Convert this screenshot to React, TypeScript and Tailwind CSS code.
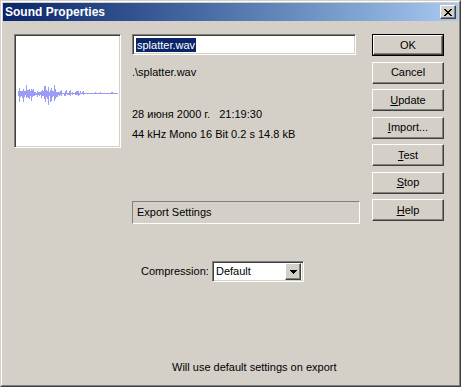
const raised =
  'border border-t-white border-l-white border-r-[#404040] border-b-[#404040] shadow-[inset_-1px_-1px_#808080]'
const sunken =
  'border border-t-[#808080] border-l-[#808080] border-r-white border-b-white shadow-[inset_1px_1px_#404040,inset_-1px_-1px_#d4d0c8]'

function rand(seed: number) {
  let s = seed
  return () => {
    s = (s * 9301 + 49297) % 233280
    return s / 233280
  }
}

function Waveform() {
  const r = rand(11)
  const bars: { x: number; up: number; down: number }[] = []
  for (let x = 18; x < 118; x++) {
    let up = 0
    let down = 0
    if (x < 62) {
      const tall = r() < 0.3
      const a = tall ? 6 + r() * 7 : 1 + r() * 4
      up = Math.round(a * (0.3 + r() * 0.7))
      down = Math.round(a * (0.4 + r() * 0.9))
    } else if (x < 84) {
      const a = r() * 4
      up = Math.round(a * r())
      down = Math.round(a * r())
    } else if (r() < 0.08) {
      up = 1
    }
    bars.push({ x, up, down })
  }
  return (
    <svg width="101" height="108" viewBox="17 37 101 108" shapeRendering="crispEdges">
      {bars.map((b) => (
        <rect key={b.x} x={b.x} y={93 - b.up} width="1" height={b.up + b.down + 1} fill="#9c9cf6" />
      ))}
      <rect x="18" y="93" width="100" height="1" fill="#9c9cf6" />
    </svg>
  )
}

function Btn({ children, def }: { children: React.ReactNode; def?: boolean }) {
  if (def) {
    return (
      <div className="h-[22px] w-[72px] border border-black">
        <div className={`h-full w-full flex items-center justify-center bg-[#d4d0c8] ${raised}`}>{children}</div>
      </div>
    )
  }
  return (
    <div className={`h-[22px] w-[72px] flex items-center justify-center bg-[#d4d0c8] ${raised}`}>{children}</div>
  )
}

export default function App() {
  return (
    <div
      className="w-[461px] h-[387px] bg-[#d4d0c8] border border-t-[#d4d0c8] border-l-[#d4d0c8] border-r-[#404040] border-b-[#404040] text-[11px] leading-[13px] text-black"
      style={{ fontFamily: '"Liberation Sans", Arial, sans-serif' }}
    >
      <div className="h-full w-full border border-t-white border-l-white border-r-[#808080] border-b-[#808080] p-px flex flex-col">
        <div className="h-[18px] flex items-center justify-between bg-gradient-to-r from-[#0a246a] to-[#a6caf0] pl-[2px] pr-[2px] shrink-0">
          <span className="text-white font-bold text-[12px]">Sound Properties</span>
          <div className={`w-[16px] h-[14px] flex items-center justify-center bg-[#d4d0c8] ${raised}`}>
            <svg width="8" height="7" viewBox="0 0 8 7" shapeRendering="crispEdges">
              <path d="M0 0h2v1h-2zM6 0h2v1h-2zM1 1h2v1h-2zM5 1h2v1h-2zM2 2h4v1h-4zM3 3h2v1h-2zM2 4h4v1h-4zM1 5h2v1h-2zM5 5h2v1h-2zM0 6h2v1h-2zM6 6h2v1h-2z" fill="#000" />
            </svg>
          </div>
        </div>

        <div className="flex pl-[11px] pt-[13px]">
          <div className={`w-[107px] h-[114px] bg-white flex items-center justify-center ${sunken}`}>
            <Waveform />
          </div>

          <div className="ml-[11px] w-[228px] flex flex-col">
            <div className={`w-[224px] h-[21px] bg-white flex items-center pl-[3px] ${sunken}`}>
              <span className="bg-[#0a246a] text-white px-px leading-[14px]">splatter.wav</span>
            </div>
            <div className="mt-[11px]">.\splatter.wav</div>
            <div className="mt-[29px] whitespace-pre">28 июня 2000 г.   21:19:30</div>
            <div className="mt-[7px]">44 kHz Mono 16 Bit 0.2 s 14.8 kB</div>
            <div className="mt-[60px] h-[23px] w-[228px] border border-t-[#808080] border-l-[#808080] border-r-white border-b-white flex items-center pl-[4px]">
              Export Settings
            </div>
          </div>

          <div className="ml-[12px] flex flex-col gap-[5.5px]">
            <Btn def>OK</Btn>
            <Btn>Cancel</Btn>
            <Btn>
              <span><u>U</u>pdate</span>
            </Btn>
            <Btn>
              <span><u>I</u>mport...</span>
            </Btn>
            <Btn>
              <span><u>T</u>est</span>
            </Btn>
            <Btn>
              <span><u>S</u>top</span>
            </Btn>
            <Btn>
              <span><u>H</u>elp</span>
            </Btn>
          </div>
        </div>

        <div className="flex items-center mt-[37px] pl-[138px]">
          <span className="w-[71px]">Compression:</span>
          <div className={`w-[92px] h-[21px] bg-white flex items-center justify-between pl-[3px] pr-[2px] ${sunken}`}>
            <span>Default</span>
            <div className={`w-[16px] h-[17px] bg-[#d4d0c8] flex items-center justify-center ${raised}`}>
              <svg width="7" height="4" viewBox="0 0 7 4" shapeRendering="crispEdges">
                <path d="M0 0h7v1h-7zM1 1h5v1h-5zM2 2h3v1h-3zM3 3h1v1h-1z" fill="#000" />
              </svg>
            </div>
          </div>
        </div>

        <div className="mt-[79px] pl-[169px]">Will use default settings on export</div>
      </div>
    </div>
  )
}
